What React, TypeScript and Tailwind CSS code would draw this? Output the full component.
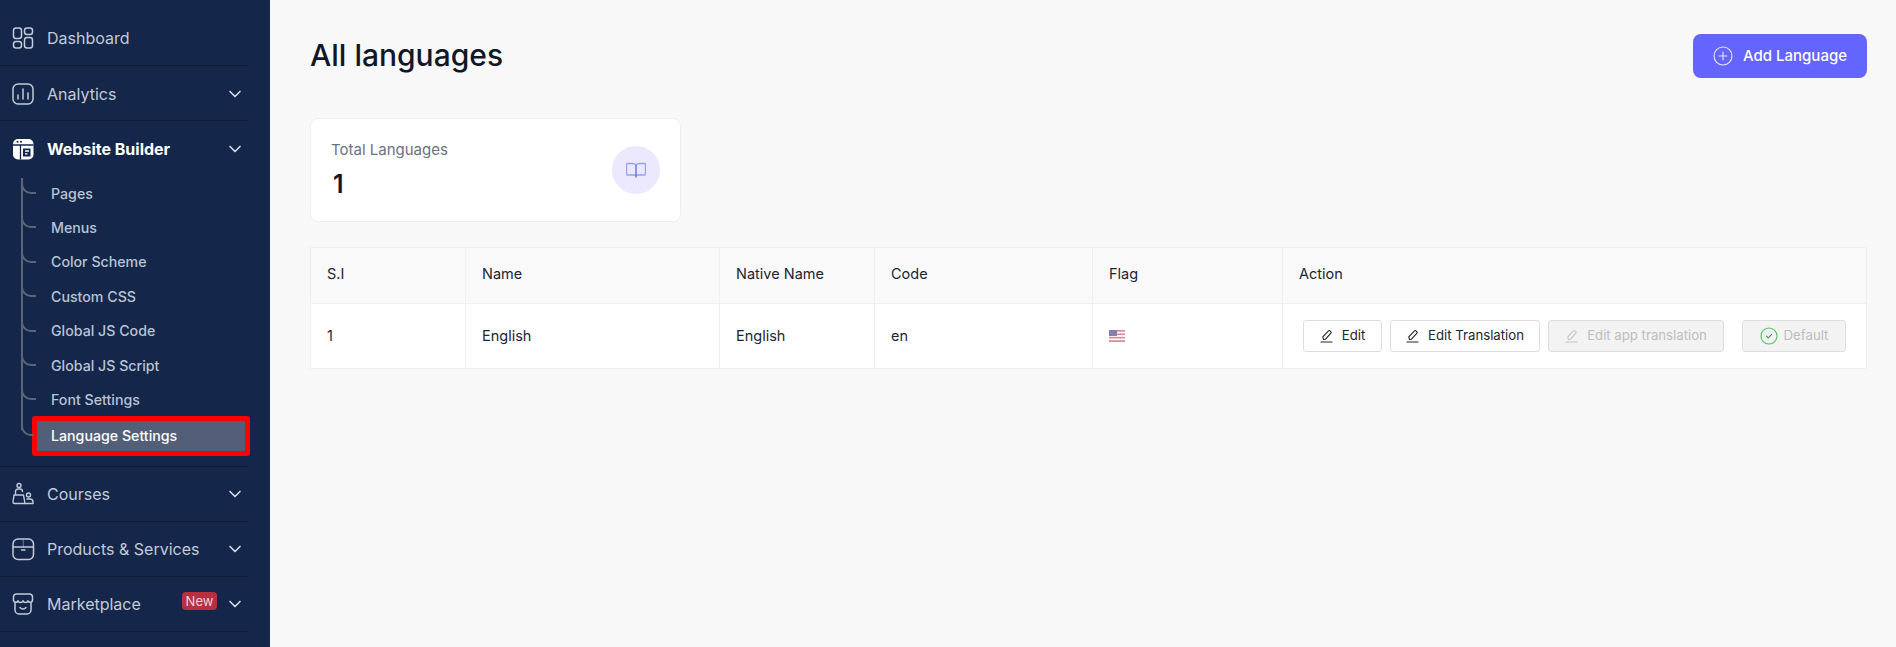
import React from "react"
import { ChevronDown } from "lucide-react"

const subItems = [
    "Pages",
    "Menus",
    "Color Scheme",
    "Custom CSS",
    "Global JS Code",
    "Global JS Script",
    "Font Settings",
]

function DashboardIcon() {
    return (
        <svg width="24" height="24" viewBox="0 0 24 24" fill="none" stroke="currentColor" strokeWidth="1.5">
            <rect x="2.5" y="2" width="8" height="10.5" rx="2.5" />
            <rect x="13.5" y="2" width="8" height="6.5" rx="2.5" />
            <rect x="2.5" y="15.5" width="8" height="6.5" rx="2.5" />
            <rect x="13.5" y="11.5" width="8" height="10.5" rx="2.5" />
        </svg>
    )
}

function AnalyticsIcon() {
    return (
        <svg width="24" height="24" viewBox="0 0 24 24" fill="none" stroke="currentColor" strokeWidth="1.5" strokeLinecap="round">
            <rect x="2" y="2" width="20" height="20" rx="5" />
            <path d="M7 17v-4M12 17V7M17 17v-6" />
        </svg>
    )
}

function BuilderIcon() {
    return (
        <svg width="24" height="24" viewBox="0 0 24 24" fill="none">
            <rect x="2" y="2" width="20.500" height="20.500" rx="5" fill="#fff" />
            <circle cx="6.500" cy="4.800" r="1" fill="#14274a" />
            <circle cx="10" cy="4.800" r="1" fill="#14274a" />
            <path d="M2 8h20.500M9.500 8v14.500" stroke="#14274a" strokeWidth="1.300" />
            <path d="M12 11.500h7.500v8H12z" fill="#14274a" />
            <path d="M14 14h4M14 16.800h2.500" stroke="#fff" strokeWidth="1.300" />
        </svg>
    )
}

function CoursesIcon() {
    return (
        <svg width="24" height="24" viewBox="0 0 24 24" fill="none" stroke="currentColor" strokeWidth="1.4" strokeLinecap="round" strokeLinejoin="round">
            <circle cx="8" cy="3.500" r="2" />
            <path d="M4.500 12V9.500A2.500 2.500 0 0 1 7 7h2a2.500 2.500 0 0 1 2.500 2.500" />
            <circle cx="17.500" cy="13" r="2" />
            <path d="M3 13h9.500l1.500 8.500H3.500a1.500 1.500 0 0 1-1.500-1.500l1-7Z" />
            <path d="M14 21.500h8v-1.500a3 3 0 0 0-3-3h-3" />
        </svg>
    )
}

function ProductsIcon() {
    return (
        <svg width="24" height="24" viewBox="0 0 24 24" fill="none" stroke="currentColor" strokeWidth="1.500" strokeLinecap="round">
            <rect x="2" y="2" width="20.500" height="20.500" rx="5" />
            <path d="M2 10h20.500M10.500 13h3.500" strokeWidth="1.300" />
            <path d="M12.250 2.500V10" strokeWidth="1" opacity="0.5" />
        </svg>
    )
}

function MarketIcon() {
    return (
        <svg width="24" height="24" viewBox="0 0 24 24" fill="none" stroke="currentColor" strokeWidth="1.500" strokeLinecap="round" strokeLinejoin="round">
            <path d="M4 11v7a4 4 0 0 0 4 4h8a4 4 0 0 0 4-4v-7" />
            <path d="M5.500 2h13a3 3 0 0 1 3 2.800V8a2.300 2.300 0 0 1-4.500.7 2.600 2.600 0 0 1-5 0 2.600 2.600 0 0 1-5 0A2.300 2.300 0 0 1 2.500 8V4.800a3 3 0 0 1 3-2.800Z" />
            <path d="M9 15.500c1.500 2 4.500 2 6 0" />
        </svg>
    )
}

function BookIcon() {
    return (
        <svg width="20" height="20" viewBox="0 0 20 20" fill="none" stroke="#96a3ea" strokeWidth="1.400">
            <path d="M10 5c-1-1-2-1.500-3.500-1.500H1.500a1 1 0 0 0-1 1V14a1 1 0 0 0 1 1H8c1 0 2 .5 2 1" />
            <path d="M10 5c1-1 2-1.500 3.500-1.500h5a1 1 0 0 1 1 1V14a1 1 0 0 1-1 1H12c-1 0-2 .5-2 1" />
            <path d="M10 5v12.500" stroke="#5f70dd" />
        </svg>
    )
}

function PenIcon({ color }: { color: string }) {
    return (
        <svg width="14" height="14" viewBox="0 0 14 14" fill="none" stroke={color} strokeWidth="1.100" strokeLinejoin="round" strokeLinecap="round">
            <path d="M3.500 10.500 2.800 7.800 8.500 1.800a1 1 0 0 1 1.400 0l1 1a1 1 0 0 1 0 1.400L5.500 10.200Z" />
            <path d="M1 13h11" />
        </svg>
    )
}

function Flag() {
    return (
        <svg width="16" height="12" viewBox="0 0 16 12" className="opacity-60">
            <rect width="16" height="12" fill="#fff" />
            <rect y="0" width="16" height="1.700" fill="#c2445a" />
            <rect y="3.400" width="16" height="1.700" fill="#c2445a" />
            <rect y="6.800" width="16" height="1.700" fill="#c2445a" />
            <rect y="10.200" width="16" height="1.800" fill="#c2445a" />
            <rect width="8" height="6" fill="#2e2f75" />
        </svg>
    )
}

function NavRow({ icon, label, chevron = true, badge = false, active = false }: { icon: React.ReactNode; label: string; chevron?: boolean; badge?: boolean; active?: boolean }) {
    return (
        <div className={`flex items-center pl-[11px] pr-[3px] h-[55px] ${chevron ? "pt-[1px]" : "pb-[1px]"} ${active ? "text-white font-bold" : "text-[#c3cad8] border-b border-[#0e1c38]"}`}>
            <span className="w-[24px] h-[24px] shrink-0">{icon}</span>
            <span className="ml-3 text-base flex-1">{label}</span>
            {badge && <span className="mr-[8px] -mt-[6px] bg-[#b92f42] text-[#e8d5da] text-[13px] leading-[18px] w-[35px] text-center rounded-sm">New</span>}
            {chevron && <ChevronDown size={20} className="text-[#d5dae4]" />}
        </div>
    )
}

function SubMenu() {
    return (
        <div className="relative pb-[10px] border-b border-[#0e1c38] w-full">
            <div className="absolute left-[21px] top-[2px] h-[252px] border-l-2 border-[#5c6577]" />
            <ul className="flex flex-col pl-[38px] text-[14.200px] font-medium text-[#b9c3d5]">
                {subItems.map((item) => (
                    <li key={item} className="relative h-[34.400px] flex items-center pl-[13px]">
                        <span className="absolute left-[-17px] top-[6px] w-[15px] h-[12px] border-l-2 border-b-2 border-[#5c6577] rounded-bl-[10px]" />
                        {item}
                    </li>
                ))}
                <li className="relative -mt-[1px] w-[218px] -ml-[6px] h-[40px]">
                    <span className="absolute left-[-11px] top-[4px] w-[13px] h-[16px] border-l-2 border-b-2 border-[#5c6577] rounded-bl-[10px]" />
                    <div className="h-full flex items-center pl-[14px] bg-[#535f79] border-[5px] border-[#ff0000] rounded-[3px] text-white">
                        Language Settings
                    </div>
                </li>
            </ul>
        </div>
    )
}

function Sidebar() {
    return (
        <aside className="w-[270px] h-screen shrink-0 bg-[#14274a] overflow-hidden pt-[11px]">
            <div className="w-[248px] overflow-visible">
                <NavRow icon={<DashboardIcon />} label="Dashboard" chevron={false} />
                <NavRow icon={<AnalyticsIcon />} label="Analytics" />
                <NavRow icon={<BuilderIcon />} label="Website Builder" active />
                <SubMenu />
                <NavRow icon={<CoursesIcon />} label="Courses" />
                <NavRow icon={<ProductsIcon />} label="Products & Services" />
                <NavRow icon={<MarketIcon />} label="Marketplace" badge />
            </div>
        </aside>
    )
}

const headers = ["S.I", "Name", "Native Name", "Code", "Flag", "Action"]

function LanguageTable() {
    return (
        <table className="w-full table-fixed border-collapse text-[14.500px] text-[#1c2434] bg-white border border-[#efefef]">
            <colgroup>
                <col className="w-[155px]" />
                <col className="w-[254px]" />
                <col className="w-[155px]" />
                <col className="w-[218px]" />
                <col className="w-[190px]" />
                <col />
            </colgroup>
            <thead>
                <tr className="h-[56px] bg-[#f9f9f9]">
                    {headers.map((h) => (
                        <th key={h} className="border border-[#efefef] px-4 pb-[3px] text-left font-normal">
                            {h}
                        </th>
                    ))}
                </tr>
            </thead>
            <tbody>
                <tr className="h-[65px]">
                    <td className="border border-[#efefef] px-4">1</td>
                    <td className="border border-[#efefef] px-4">English</td>
                    <td className="border border-[#efefef] px-4">English</td>
                    <td className="border border-[#efefef] px-4">en</td>
                    <td className="border border-[#efefef] px-4">
                        <Flag />
                    </td>
                    <td className="border border-[#efefef] pl-[20px] pr-0">
                        <div className="flex items-center text-[13.200px]">
                            <button className="h-[32px] w-[79px] flex items-center justify-center gap-2 bg-white border border-[#dedede] rounded-[3px]">
                                <PenIcon color="#222" /> Edit
                            </button>
                            <button className="ml-2 h-[32px] w-[150px] flex items-center justify-center gap-2 bg-white border border-[#dedede] rounded-[3px]">
                                <PenIcon color="#222" /> Edit Translation
                            </button>
                            <button className="ml-2 h-[32px] w-[176px] flex items-center justify-center gap-2 bg-[#f3f3f3] border border-[#dedede] rounded-[3px] text-[#bdbdbd]">
                                <PenIcon color="#c4c4c4" /> Edit app translation
                            </button>
                            <button className="ml-[18px] h-[32px] w-[104px] flex items-center justify-center gap-[6px] bg-[#f3f3f3] border border-[#dedede] rounded-[3px] text-[#bdbdbd]">
                                <svg width="18" height="18" viewBox="0 0 18 18" fill="none" stroke="#4cc35f" strokeWidth="1.100" strokeLinecap="round" strokeLinejoin="round">
                                    <circle cx="9" cy="9" r="8" />
                                    <path d="m6.500 9.200 1.800 1.800 3.300-3.600" stroke="#3f8f50" />
                                </svg>
                                Default
                            </button>
                        </div>
                    </td>
                </tr>
            </tbody>
        </table>
    )
}

export default function App() {
    return (
        <div className="flex h-screen overflow-hidden bg-[#f8f8f8]" style={{ fontFamily: "Inter, 'Noto Sans', sans-serif" }}>
            <Sidebar />
            <main className="flex-1 pl-[40px] pr-[29px] pt-[34px]">
                <div className="flex items-center justify-between h-[44px]">
                    <h1 className="-mt-[2px] text-[30px] font-medium text-[#101828]">All languages</h1>
                    <button className="h-[44px] w-[174px] flex items-center justify-center gap-[10px] rounded-lg bg-[#6464ff] text-white font-medium text-[15px]">
                        <svg width="20" height="20" viewBox="0 0 20 20" fill="none" stroke="#e6e6ff" strokeWidth="1.100" strokeLinecap="round">
                            <circle cx="10" cy="10" r="9" />
                            <path d="M10 6v8M6 10h8" />
                        </svg>
                        Add Language
                    </button>
                </div>
                <div className="mt-[40px] w-[371px] h-[104px] flex items-center justify-between bg-white border border-[#efefef] rounded-lg pl-[20px] pr-[20px]">
                    <div className="-mt-[1px]">
                        <p className="text-[15px] leading-5 text-[#6b7280]">Total Languages</p>
                        <p className="mt-[8px] pl-[2px] text-[25px] leading-8 font-semibold text-[#101828]">1</p>
                    </div>
                    <span className="w-[48px] h-[48px] rounded-full bg-[#ece9fe] flex items-center justify-center">
                        <BookIcon />
                    </span>
                </div>
                <div className="mt-[25px]">
                    <LanguageTable />
                </div>
            </main>
        </div>
    )
}
